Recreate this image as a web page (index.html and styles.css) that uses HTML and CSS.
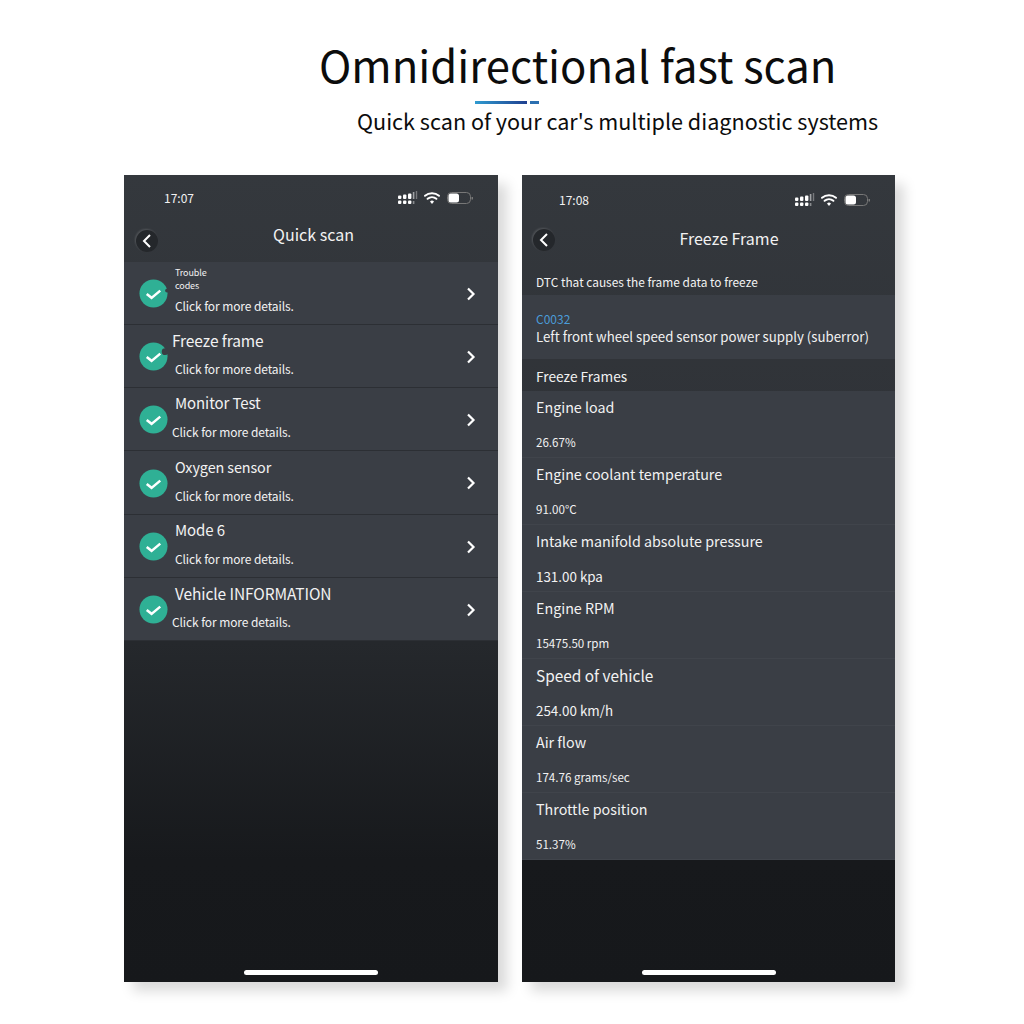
FILE: index.html
```html
<!DOCTYPE html>
<html lang="en">
<head>
    <meta charset="UTF-8">
    <title>Omnidirectional fast scan</title>
    <link rel="stylesheet" href="styles.css">
</head>
<body>
    <svg class="defs" width="0" height="0">
        <symbol id="status-icons" viewBox="0 0 76 14">
            <g fill="#fff">
                <rect x="1" y="4.500" width="3.400" height="3.400" rx="1"/><rect x="6" y="3.500" width="3.400" height="4.400" rx="1"/><rect x="11" y="2.500" width="3.400" height="5.400" rx="1"/>
                <rect x="1" y="9.500" width="3.400" height="3.400" rx="1"/><rect x="6" y="9.500" width="3.400" height="3.400" rx="1"/><rect x="11" y="9.500" width="3.400" height="3.400" rx="1"/>
            </g>
            <rect x="15.800" y="1" width="1.600" height="7" fill="#a0a2a5"/>
            <rect x="15.800" y="10" width="1.600" height="3" fill="#8a8c8f"/>
            <rect x="18.800" y="0" width="1.400" height="8" fill="#77797c"/>
            <path d="M28 4.800a11 11 0 0 1 14 0M30.600 7.800a7 7 0 0 1 8.800 0" fill="none" stroke="#fff" stroke-width="2" stroke-linecap="round"/>
            <path d="M33 10.400a3.200 3.200 0 0 1 4 0L35 13z" fill="#fff"/>
            <rect x="50.500" y="1.500" width="23" height="11" rx="4" fill="none" stroke="#777"/>
            <rect x="51.500" y="2.500" width="10.500" height="9" rx="2.500" fill="#fff"/>
            <rect x="74.500" y="6" width="1.500" height="2.500" fill="#777"/>
        </symbol>
        <symbol id="check" viewBox="0 0 30 30">
            <circle cx="15" cy="15" r="14.500" fill="#2fb095"/>
            <path d="m8 15.500 5 4 9-7.500" fill="none" stroke="#fff" stroke-width="2.600"/>
        </symbol>
        <symbol id="arrow" viewBox="0 0 10 14">
            <path d="m2 1.500 5.500 5.500-5.500 5.500" fill="none" stroke="#fff" stroke-width="2.200"/>
        </symbol>
        <symbol id="back" viewBox="0 0 12 16">
            <path d="M9 2 3 8l6 6" fill="none" stroke="#fff" stroke-width="2"/>
        </symbol>
    </svg>

    <header class="hero">
        <h1>Omnidirectional fast scan</h1>
        <div class="hero-bar"><span class="bar-long"></span><span class="bar-short"></span></div>
        <p>Quick scan of your car's multiple diagnostic systems</p>
    </header>

    <main class="phones">
        <!-- Quick scan -->
        <section class="phone">
            <div class="status">
                <span class="clock">17:07</span>
                <svg class="status-icons"><use href="#status-icons"/></svg>
            </div>
            <div class="nav nav-left">
                <button class="back"><svg width="12" height="16"><use href="#back"/></svg></button>
                <h2>Quick scan</h2>
            </div>

            <ul class="scan-list">
                <li class="scan-row">
                    <svg class="check" viewBox="0 0 30 30"><use href="#check"/><circle cx="29" cy="12" r="2" fill="#3a3e45"/></svg>
                    <div class="scan-text">
                        <div class="small-title">Trouble<br>codes</div>
                        <div class="detail">Click for more details.</div>
                    </div>
                    <svg class="arrow"><use href="#arrow"/></svg>
                </li>
                <li class="scan-row">
                    <svg class="check" viewBox="0 0 30 30"><use href="#check"/><circle cx="27" cy="10" r="3.500" fill="#3a3e45"/></svg>
                    <div class="scan-text">
                        <div class="title wide shift">Freeze frame</div>
                        <div class="detail">Click for more details.</div>
                    </div>
                    <svg class="arrow"><use href="#arrow"/></svg>
                </li>
                <li class="scan-row">
                    <svg class="check" viewBox="0 0 30 30"><use href="#check"/></svg>
                    <div class="scan-text">
                        <div class="title">Monitor Test</div>
                        <div class="detail shift">Click for more details.</div>
                    </div>
                    <svg class="arrow"><use href="#arrow"/></svg>
                </li>
                <li class="scan-row scan-row-tall">
                    <svg class="check" viewBox="0 0 30 30"><use href="#check"/></svg>
                    <div class="scan-text">
                        <div class="title narrow">Oxygen sensor</div>
                        <div class="detail">Click for more details.</div>
                    </div>
                    <svg class="arrow"><use href="#arrow"/></svg>
                </li>
                <li class="scan-row">
                    <svg class="check" viewBox="0 0 30 30"><use href="#check"/></svg>
                    <div class="scan-text">
                        <div class="title">Mode 6</div>
                        <div class="detail">Click for more details.</div>
                    </div>
                    <svg class="arrow"><use href="#arrow"/></svg>
                </li>
                <li class="scan-row">
                    <svg class="check" viewBox="0 0 30 30"><use href="#check"/></svg>
                    <div class="scan-text">
                        <div class="title wide">Vehicle INFORMATION</div>
                        <div class="detail shift">Click for more details.</div>
                    </div>
                    <svg class="arrow"><use href="#arrow"/></svg>
                </li>
            </ul>
            <div class="home-bar"></div>
        </section>

        <!-- Freeze frame -->
        <section class="phone">
            <div class="status status-right">
                <span class="clock">17:08</span>
                <svg class="status-icons"><use href="#status-icons"/></svg>
            </div>
            <div class="nav nav-right">
                <button class="back"><svg width="12" height="16"><use href="#back"/></svg></button>
                <h2>Freeze Frame</h2>
            </div>
            <div class="section-label first">DTC that causes the frame data to freeze</div>
            <div class="dtc">
                <div class="dtc-code">C0032</div>
                <div class="dtc-desc">Left front wheel speed sensor power supply (suberror)</div>
            </div>
            <div class="section-label frames">Freeze Frames</div>
            <ul class="frame-list">
                <li class="frame-row"><div class="frame-title">Engine load</div><div class="value">26.67%</div></li>
                <li class="frame-row"><div class="frame-title">Engine coolant temperature</div><div class="value">91.00°C</div></li>
                <li class="frame-row"><div class="frame-title">Intake manifold absolute pressure</div><div class="value big">131.00 kpa</div></li>
                <li class="frame-row"><div class="frame-title">Engine RPM</div><div class="value">15475.50 rpm</div></li>
                <li class="frame-row"><div class="frame-title big">Speed of vehicle</div><div class="value big">254.00 km/h</div></li>
                <li class="frame-row"><div class="frame-title">Air flow</div><div class="value">174.76 grams/sec</div></li>
                <li class="frame-row"><div class="frame-title">Throttle position</div><div class="value">51.37%</div></li>
            </ul>
            <div class="home-bar"></div>
        </section>
    </main>
</body>
</html>
```

FILE: styles.css
```css
body {
    margin: 0;
    height: 1024px;
    overflow: hidden;
    background-color: #fff;
    font-family: "Noto Sans CJK SC", "Noto Sans", sans-serif;
}

.defs {
    position: absolute;
}

.hero {
    height: 175px;
    box-sizing: border-box;
    padding-top: 34px;
    color: #0c0c0c;
}

.hero h1 {
    margin: 0 0 0 319px;
    font-size: 43.600px;
    font-weight: 400;
    line-height: 60px;
    white-space: nowrap;
}

.hero-bar {
    display: flex;
    gap: 3px;
    margin: 7px 0 0 475px;
    height: 3px;
}

.bar-long {
    width: 52px;
    background: linear-gradient(90deg, #2f9bd0, #1f3f8f);
}

.bar-short {
    width: 9px;
    background-color: #2b6fb0;
}

.hero p {
    margin: 2px 0 0 357px;
    font-size: 21.600px;
    font-weight: 400;
    line-height: 30px;
    white-space: nowrap;
}

.phones {
    display: flex;
    gap: 24px;
    margin-left: 124px;
}

.phone {
    position: relative;
    width: 374px;
    height: 807px;
    background: linear-gradient(180deg, #34383d 0%, #2f3237 35%, #25282c 58%, #17191c 85%, #16181b 100%);
    box-shadow: 9px 9px 12px rgba(0, 0, 0, 0.15);
    color: #f2f2f2;
}

.phone + .phone {
    width: 373px;
}

.status {
    display: flex;
    justify-content: space-between;
    align-items: center;
    height: 44px;
    padding: 0 25px 0 40px;
}

.status-right {
    height: 48px;
    padding-left: 37px;
}

.clock {
    font-size: 12px;
}

.status-icons {
    display: block;
    width: 76px;
    height: 14px;
    margin-top: 2px;
}

.nav {
    display: flex;
    align-items: center;
    padding-left: 12px;
}

.nav-left {
    height: 43px;
}

.nav-right {
    height: 33px;
    padding-left: 11px;
}

.nav h2 {
    flex: 1;
    margin: 0 0 14px -29px;
    font-size: 16px;
    font-weight: 400;
    line-height: 24px;
    text-align: center;
}

.nav-right h2 {
    margin: 0 0 4px 8px;
}

.back {
    display: flex;
    align-items: center;
    justify-content: center;
    width: 22px;
    height: 22px;
    padding: 0;
    border: none;
    border-radius: 50%;
    background-color: #24272b;
    box-shadow: -1px -1px 2px rgba(255, 255, 255, 0.15);
}

.scan-list,
.frame-list {
    margin: 0;
    padding: 0;
    list-style: none;
}

.scan-row {
    display: flex;
    align-items: center;
    height: 63px;
    box-sizing: border-box;
    padding: 1px 22px 0 15px;
    background-color: #3a3e45;
    border-bottom: 1px solid #2c2f34;
}

.scan-row-tall {
    height: 64px;
}

.check {
    flex: none;
    width: 29px;
    height: 29px;
    margin-right: 7px;
}

.arrow {
    width: 10px;
    height: 14px;
}

.scan-text {
    flex: 1;
    height: 62px;
    margin-top: -1px;
    display: flex;
    flex-direction: column;
    justify-content: space-between;
    padding: 5px 0 10px;
    box-sizing: border-box;
    letter-spacing: -0.1px;
}

.small-title {
    margin-top: -1px;
    font-size: 9px;
    line-height: 13px;
}

.title {
    font-size: 15px;
    line-height: 20px;
    white-space: nowrap;
}

.title.wide {
    font-size: 15.500px;
}

.title.narrow {
    font-size: 14.400px;
}

.detail {
    font-size: 12px;
    line-height: 16px;
    white-space: nowrap;
}

.shift {
    margin-left: -3px;
}

.section-label {
    padding-left: 14px;
    display: flex;
    align-items: center;
}

.section-label.first {
    height: 39px;
    box-sizing: border-box;
    padding-top: 12px;
    font-size: 11.900px;
}

.section-label.frames {
    height: 32px;
    box-sizing: border-box;
    padding-top: 2px;
    font-size: 13.700px;
}

.dtc {
    height: 64px;
    box-sizing: border-box;
    padding: 16px 14px 0;
    background-color: #3a3e45;
}

.dtc-code {
    font-size: 12px;
    line-height: 16px;
    color: #4a9bd8;
}

.dtc-desc {
    font-size: 13.250px;
    line-height: 20px;
    white-space: nowrap;
}

.frame-row {
    height: 67px;
    box-sizing: border-box;
    padding: 6px 14px 0;
    background-color: #3a3e45;
    border-bottom: 1px solid #40444b;
}

.frame-title {
    font-size: 14.300px;
    line-height: 20px;
    white-space: nowrap;
}

.frame-title.big {
    font-size: 15.400px;
}

.value {
    margin-top: 17px;
    font-size: 11.600px;
    line-height: 16px;
}

.value.big {
    font-size: 13.400px;
}

.home-bar {
    position: absolute;
    left: 50%;
    bottom: 7px;
    width: 134px;
    height: 5px;
    margin-left: -67px;
    border-radius: 3px;
    background-color: #fff;
}
```
